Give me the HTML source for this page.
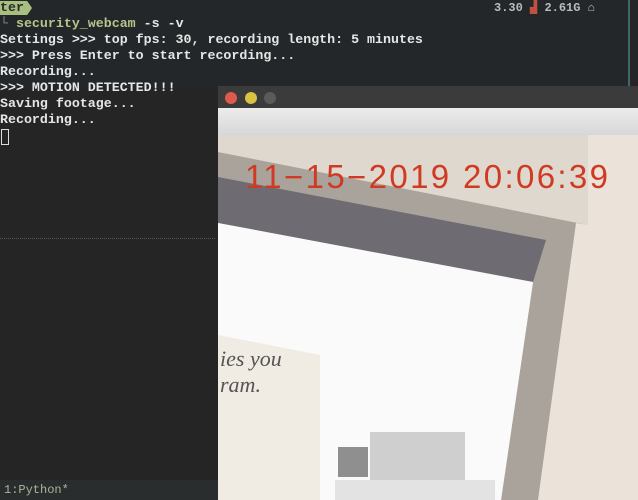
<!DOCTYPE html>
<html><head><meta charset="utf-8"><style>
body{margin:0;width:638px;height:500px;overflow:hidden;background:#252525;position:relative;font-family:"Liberation Mono",monospace}
.t{position:absolute;left:0;font-size:13.3px;color:#e6e6e6;white-space:pre;line-height:16px;font-weight:bold}
</style></head><body>
<div style="position:absolute;left:0;top:0;width:628px;height:86px;background:#23272a"></div>
<div style="position:absolute;left:628px;top:0;width:2px;height:86px;background:#3c6a6a"></div>
<div style="position:absolute;left:0;top:1px;width:32px;height:14px;background:#a7c080;clip-path:polygon(0 0,85% 0,100% 50%,85% 100%,0 100%)"></div>
<div class="t" style="top:0;color:#2a2a2a">ter</div>
<div class="t" style="top:16px"><span style="color:#888">└</span> <span style="color:#b8c48a">security_webcam</span> -s -v</div>
<div class="t" style="top:32px">Settings &gt;&gt;&gt; top fps: 30, recording length: 5 minutes</div>
<div class="t" style="top:48px">&gt;&gt;&gt; Press Enter to start recording...</div>
<div class="t" style="top:64px">Recording...</div>
<div class="t" style="top:80px">&gt;&gt;&gt; MOTION DETECTED!!!</div>
<div class="t" style="top:96px">Saving footage...</div>
<div class="t" style="top:112px">Recording...</div>
<div style="position:absolute;left:1px;top:129px;width:6px;height:14px;border:1px solid #ddd"></div>
<div class="t" style="top:0;left:494px;color:#bbb;font-size:12px">3.30 <span style="color:#c05040">▟</span> 2.61G ⌂</div>
<div style="position:absolute;left:0;top:238px;width:215px;height:1px;border-top:1px dotted #556"></div>
<div style="position:absolute;left:0;top:480px;width:218px;height:20px;background:#2a2d2e"></div>
<div class="t" style="top:482px;left:4px;font-size:12px;color:#a9b79a;font-weight:normal">1:Python*</div>
<div style="position:absolute;left:218px;top:86px;width:420px;height:22px;background:#3b3b3b"></div>
<div style="position:absolute;left:225px;top:92px;width:12px;height:12px;border-radius:50%;background:#dd5a4e"></div>
<div style="position:absolute;left:245px;top:92px;width:12px;height:12px;border-radius:50%;background:#d9c244"></div>
<div style="position:absolute;left:264px;top:92px;width:12px;height:12px;border-radius:50%;background:#5a5a5a"></div>
<div style="position:absolute;left:218px;top:108px;width:420px;height:27px;background:linear-gradient(#ececec,#d7d7d7)"></div>
<svg style="position:absolute;left:0;top:0" width="638" height="500">
<rect x="218" y="135" width="420" height="365" fill="#ebe3d9"/>
<polygon points="218,135 588,135 588,225 218,152" fill="#dfd8cf"/>
<polygon points="218,152 588,225 576,223 538,500 501,500 533,282 218,223" fill="#aaa39c"/>
<polygon points="218,177 546,240 533,282 218,223" fill="#6e6c72"/>
<polygon points="218,223 533,282 501,500 218,500" fill="#fafafa"/>
<polygon points="218,335 320,355 320,500 218,500" fill="#f1ece3"/>
<text x="220" y="366" font-family="Liberation Serif,serif" font-style="italic" font-size="22" fill="#555">ies you</text>
<text x="220" y="392" font-family="Liberation Serif,serif" font-style="italic" font-size="22" fill="#555">ram.</text>
<rect x="338" y="447" width="30" height="30" fill="#8f8f8f"/>
<rect x="370" y="432" width="95" height="55" fill="#cfcfcf"/>
<rect x="335" y="480" width="160" height="20" fill="#e3e3e3"/>
<text x="245" y="188" font-family="Liberation Sans,sans-serif" font-size="33" fill="#d03a22" textLength="363" lengthAdjust="spacing">11−15−2019 20:06:39</text>
</svg>
</body></html>
